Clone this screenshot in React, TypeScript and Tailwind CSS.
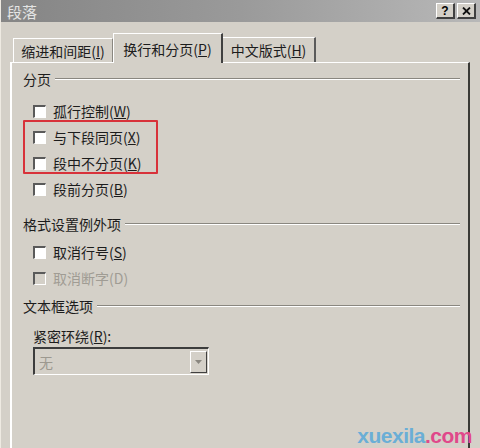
const font = { fontFamily: '"Noto Sans CJK SC", "Noto Sans", sans-serif' };

const Check = ({ label, hot, disabled = false }: { label: string; hot: string; disabled?: boolean }) => (
  <div className="flex items-center h-[26px] gap-[7px]">
    <span
      className={`w-[13px] h-[13px] border-t-2 border-l-2 border-b border-r border-t-[#5a5a5a] border-l-[#5a5a5a] border-b-white border-r-white ${
        disabled ? "bg-[#d4d0c8]" : "bg-white"
      }`}
    />
    <span className={`text-[14px] leading-none ${disabled ? "text-[#a09c94]" : "text-[#1c1c1c]"}`}>
      {label}({disabled ? hot : <u>{hot}</u>})
    </span>
  </div>
);

const Group = ({ title, children }: { title: string; children?: React.ReactNode }) => (
  <div className="flex flex-col">
    <div className="flex items-center gap-[4px] h-[20px]">
      <span className="text-[14px] leading-none text-[#1c1c1c]">{title}</span>
      <div className="flex-1 h-[2px] border-t border-t-[#8a8780] border-b border-b-white" />
    </div>
    <div className="pl-[10px] flex flex-col">{children}</div>
  </div>
);

export default function App() {
  return (
    <div className="w-[480px] h-[448px] bg-[#d4d0c8] flex flex-col relative overflow-hidden border-l border-l-[#eeeae2]" style={font}>
      {/* title bar */}
      <div className="h-[22px] flex items-center justify-between pl-[6px] pr-[4px] bg-gradient-to-r from-[#858585] via-[#9a9a9a] to-[#b8b8b8]">
        <span className="text-[15px] text-[#e4e4e4] leading-none">段落</span>
        <div className="flex gap-[2px]">
          <div className="w-[19px] h-[16px] bg-[#d4d0c8] border-t border-l border-t-white border-l-white border-b-2 border-r-2 border-b-[#404040] border-r-[#404040] flex items-center justify-center text-[12px] font-bold leading-none text-black" style={{ fontFamily: '"Liberation Sans", sans-serif' }}>
            ?
          </div>
          <div className="w-[19px] h-[16px] bg-[#d4d0c8] border-t border-l border-t-white border-l-white border-b-2 border-r-2 border-b-[#404040] border-r-[#404040] flex items-center justify-center">
            <svg width="9" height="8" viewBox="0 0 9 8">
              <path d="M1 0.5 L8 7.5 M8 0.5 L1 7.5" stroke="#111" strokeWidth="1.8" />
            </svg>
          </div>
        </div>
      </div>

      {/* tabs */}
      <div className="flex items-end pl-[12px] pt-[10px] h-[40px] pr-[11px]">
        <div className="h-[24px] w-[100px] flex items-center justify-center border-t border-l border-t-white border-l-white border-r border-r-[#8a8780] text-[14px] leading-none text-[#1c1c1c]">
          缩进和间距(<u>I</u>)
        </div>
        <div className="h-[30px] w-[110px] -mb-[1px] bg-[#d4d0c8] z-10 flex items-center justify-center border-t border-l border-t-white border-l-white border-r-2 border-r-[#404040] text-[14px] leading-none text-[#1c1c1c]">
          换行和分页(<u>P</u>)
        </div>
        <div className="h-[25px] w-[93px] flex items-center justify-center border-t border-t-white border-r-2 border-r-[#5a5a5a] text-[14px] leading-none text-[#1c1c1c]">
          中文版式(<u>H</u>)
        </div>
      </div>

      {/* panel */}
      <div className="flex-1 ml-[9px] mr-[10px] border-t border-l-2 border-t-white border-l-white border-r-2 border-r-[#3a3a36] pl-[11px] pr-[8px] pt-[6px] flex flex-col">
        <Group title="分页">
          <div className="h-[9px]" />
          <Check label="孤行控制" hot="W" />
          <div className="relative">
            <div className="absolute -left-[10px] -top-[4px] w-[135px] h-[54px] border-2 border-[#d8323a] rounded-[1px]" />
            <Check label="与下段同页" hot="X" />
            <Check label="段中不分页" hot="K" />
          </div>
          <Check label="段前分页" hot="B" />
        </Group>
        <div className="h-[12px]" />
        <Group title="格式设置例外项">
          <div className="h-[5px]" />
          <Check label="取消行号" hot="S" />
          <Check label="取消断字" hot="D" disabled />
        </Group>
        <div className="h-[5px]" />
        <Group title="文本框选项">
          <div className="h-[13px]" />
          <span className="text-[14px] leading-none text-[#1c1c1c]">
            紧密环绕(<u>R</u>):
          </span>
          <div className="mt-[4px] w-[176px] h-[28px] bg-[#d4d0c8] border-t-2 border-l-2 border-t-[#3c3c3c] border-l-[#3c3c3c] border-b border-r border-b-white border-r-white flex items-center justify-between pl-[4px] pr-[1px]">
            <span className="text-[14px] leading-none text-[#9c988f]">无</span>
            <div className="w-[17px] h-[22px] border-t border-l border-t-white border-l-white border-b border-r border-b-[#404040] border-r-[#404040] flex items-center justify-center">
              <svg width="7" height="4" viewBox="0 0 7 4">
                <path d="M0 0 H7 L3.5 4 Z" fill="#8a8780" />
              </svg>
            </div>
          </div>
        </Group>
      </div>

      {/* watermark */}
      <div className="absolute right-[8px] bottom-[2px] text-[21px] font-bold leading-none tracking-[-0.5px]" style={{ fontFamily: '"Liberation Sans", Arial, sans-serif' }}>
        <span className="text-[#6aaed6]">xuexila</span>
        <span className="text-[#e0488a]">.com</span>
      </div>
    </div>
  );
}
